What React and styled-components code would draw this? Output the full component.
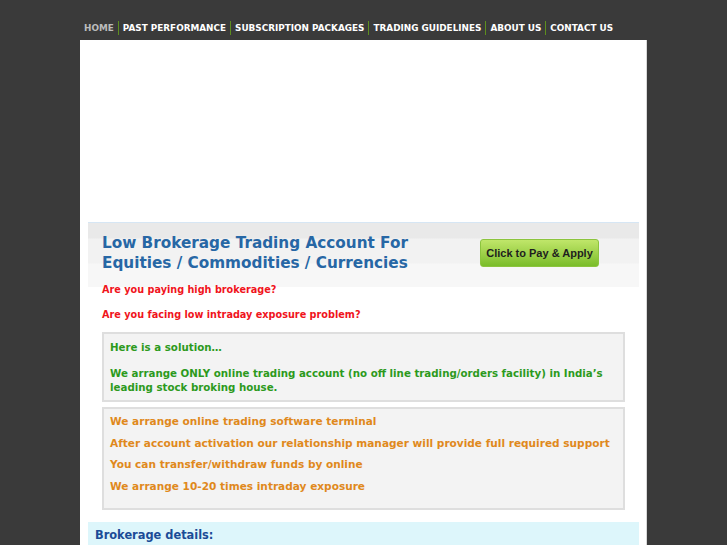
import React from "react";
import styled, { createGlobalStyle } from "styled-components";

const Global = createGlobalStyle`
  html, body { margin: 0; padding: 0; }
  body {
    background: #3a3a3a;
    font-family: "DejaVu Sans", Verdana, sans-serif;
  }
`;

const Page = styled.div`
  width: 567px;
  margin: 0 auto;
`;

const Nav = styled.nav`
  display: flex;
  align-items: center;
  height: 40px;
  box-sizing: border-box;
  padding-top: 15px;
`;

const NavItem = styled.a`
  display: block;
  font-size: 8.85px;
  font-weight: bold;
  line-height: 14px;
  padding: 0 4px;
  color: ${(p) => (p.$active ? "#bcbcbc" : "#ffffff")};
  text-decoration: none;
  border-left: ${(p) => (p.$first ? "none" : "1px solid #5d8e1e")};
  white-space: nowrap;
`;

const Container = styled.div`
  background: #ffffff;
  border-right: 1px solid #d8d8d8;
  padding: 182px 7px 0 8px;
  min-height: 520px;
`;

const Hero = styled.div`
  display: flex;
  align-items: flex-start;
  justify-content: space-between;
  border-top: 1px solid #d6e6f4;
  background: linear-gradient(
    to bottom,
    #e9e9e9 0px,
    #e9e9e9 15px,
    #f2f2f2 16px,
    #f2f2f2 40px,
    #f7f7f7 41px,
    #f7f7f7 100%
  );
  height: 64px;
  padding: 0 40px 0 14px;
`;

const Title = styled.h1`
  margin: 0;
  padding-top: 11px;
  font-size: 15.25px;
  line-height: 19.5px;
  font-weight: bold;
  color: #2767a5;
`;

const PayButton = styled.button`
  margin-top: 16px;
  width: 119px;
  height: 28px;
  border: 1px solid #8cc43e;
  border-radius: 3px;
  background: linear-gradient(to bottom, #c0e66a 0%, #9fd24a 50%, #7abd2a 100%);
  font-family: "Liberation Sans", Arial, sans-serif;
  font-size: 11px;
  font-weight: bold;
  color: #1e1e1e;
  padding: 0;
  cursor: pointer;
`;

const Body = styled.div`
  margin-top: -3px;
  padding: 0 14px;
`;

const Question = styled.p`
  margin: 0;
  font-size: 9.7px;
  font-weight: bold;
  line-height: 11px;
  color: #f0141c;
  margin-bottom: ${(p) => p.$mb || 0}px;
`;

const Panel = styled.div`
  background: #f3f3f3;
  border: 2px solid #dedede;
  padding: ${(p) => p.$pad};
  margin: ${(p) => p.$margin};
  font-size: ${(p) => p.$size}px;
  font-weight: bold;
  color: ${(p) => p.$color};
`;

const Para = styled.p`
  margin: 0 0 ${(p) => p.$mb || 0}px 0;
  line-height: 14px;
`;

const Line = styled.div`
  line-height: 21.67px;
`;

const Strip = styled.div`
  background: #ddf6fb;
  margin-top: 12px;
  padding: 6px 7px;
  font-size: 11.4px;
  font-weight: bold;
  color: #1b4c97;
  line-height: 14px;
  height: 30px;
  box-sizing: border-box;
`;

const navItems = [
  "HOME",
  "PAST PERFORMANCE",
  "SUBSCRIPTION PACKAGES",
  "TRADING GUIDELINES",
  "ABOUT US",
  "CONTACT US",
];

export default function App() {
  return (
    <>
      <Global />
      <Page>
        <Nav>
          {navItems.map((t, i) => (
            <NavItem key={t} href="#" $active={i === 0} $first={i === 0}>
              {t}
            </NavItem>
          ))}
        </Nav>
        <Container>
          <Hero>
            <Title>
              Low Brokerage Trading Account For
              <br />
              Equities / Commodities / Currencies
            </Title>
            <PayButton>Click to Pay &amp; Apply</PayButton>
          </Hero>
          <Body>
            <Question $mb={14}>Are you paying high brokerage?</Question>
            <Question>Are you facing low intraday exposure problem?</Question>
            <Panel $color="#2c9a1c" $size={10.26} $pad="6px 6px" $margin="12px 0 0 0">
              <Para $mb={12}>Here is a solution…</Para>
              <Para>
                We arrange ONLY online trading account (no off line trading/orders facility) in India’s
                leading stock broking house.
              </Para>
            </Panel>
            <Panel $color="#e0891c" $size={10.55} $pad="2px 6px 10px" $margin="5px 0 0 0">
              <Line>We arrange online trading software terminal</Line>
              <Line>After account activation our relationship manager will provide full required support</Line>
              <Line>You can transfer/withdraw funds by online</Line>
              <Line>We arrange 10-20 times intraday exposure</Line>
            </Panel>
          </Body>
          <Strip>Brokerage details:</Strip>
        </Container>
      </Page>
    </>
  );
}
